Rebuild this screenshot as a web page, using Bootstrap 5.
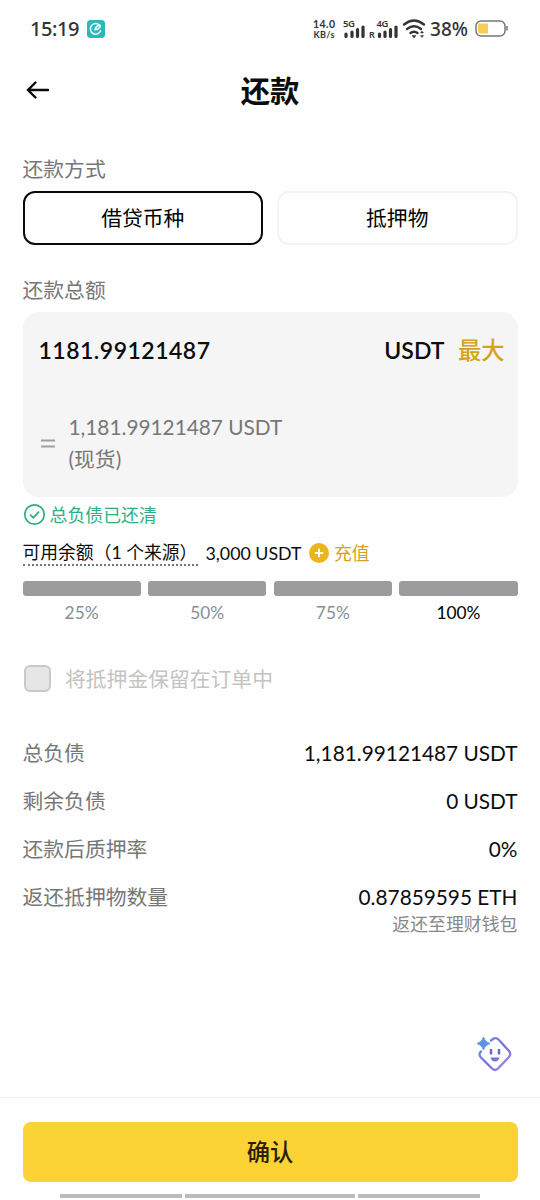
<!DOCTYPE html>
<html lang="zh-CN">
<head>
<meta charset="utf-8">
<meta name="viewport" content="width=device-width, initial-scale=1">
<title>还款</title>
<link rel="stylesheet" href="https://cdn.jsdelivr.net/npm/bootstrap@5.3.0/dist/css/bootstrap.min.css">
<style>
  body { font-family: Lato, "Noto Sans CJK SC", sans-serif; color: #0c0c0c; background: #fefefe; line-height: 1; font-size: 20.8px; }
  svg { display: block; flex: none; }
  .screen { height: 1200px; padding: 0 22.5px; overflow: hidden; }
  .status { height: 58px; margin: 0 -22.5px; padding: 0 32px 0 30px; font-family: "Noto Sans", sans-serif; color: #333; font-weight: 500; font-size: 20px; }
  .clock { letter-spacing: -.45px; }
  .status svg text { font-family: "Noto Sans", sans-serif; font-weight: 600; fill: #333; }
  .status svg .rate { font-family: Lato, sans-serif; font-weight: 700; }
  .topbar { height: 64px; }
  .topbar h1 { font-size: 29.3px; font-weight: 700; margin: 0; line-height: 1; padding-top: 2px; }
  .side { width: 28px; }
  .muted { color: #777; }
  .caption { height: 24px; padding-top: 1px; }
  .methods { gap: 14px; margin-top: 10px; }
  .method { height: 54px; border: 2px solid #f3f3f3; border-radius: 12px; background: transparent; font-weight: 400; font-size: 20.8px; line-height: 1; padding: 2px 0 0; color: #000; }
  .method.active { border-color: #0a0a0a; }
  .amount { height: 185px; border-radius: 16px; background: #f5f5f5; padding: 0 13px 0 16px; margin-top: 10px; }
  .amount-top { height: 77px; font-size: 23px; font-weight: 600; }
  .gold { color: #d5a31b; }
  .max { font-size: 23.3px; font-weight: 500; margin-left: 13.5px; padding-top: 1px; }
  .big { letter-spacing: .5px; }
  .equiv { line-height: 32.5px; padding-top: 21.5px; }
  .ok { height: 36px; font-size: 17.9px; color: #2fae86; }
  .ok span { padding-top: 2px; }
  .balance { height: 40px; font-size: 17.8px; }
  .balance > span { padding-top: 2px; }
  .dotted { border-bottom: 2px dotted #777; height: 26px; width: 175px; white-space: nowrap; }
  .steps { gap: 7.5px; padding-top: 7.5px; }
  .step { flex: 1 1 0; }
  .seg { height: 15px; border-radius: 3px; background: #9c9c9c; }
  .pct { height: 33px; font-size: 17.3px; color: #888f96; padding-top: 2px; }
  .box { width: 27px; height: 27px; border: 2px solid #c9c9c9; border-radius: 6px; background: #e6e6e6; }
  .faded { color: #c3c3c3; }
  .line { height: 47.7px; }
  .note { font-size: 17.9px; color: #888; }
  .footer-area { margin: 0 -22.5px; padding: 24px 22.5px 0; border-top: 1px solid #ededed; height: 103px; }
  .confirm { height: 60px; border-radius: 8px; background: #fbd334; border: 0; font-size: 23.3px; font-weight: 500; color: #2a1e05; line-height: 1; padding-top: 3px; }
  .handle { height: 4px; background: #bcbcbc; }
</style>
</head>
<body>
<main class="screen d-flex flex-column">
  <div class="status d-flex align-items-center">
    <span class="clock">15:19</span>
    <svg style="margin-left:8px" width="18" height="18" viewBox="0 0 18 18"><rect width="18" height="18" rx="3.5" fill="#2bb8bd"/><path d="M13.600 10.800A5.300 5.300 0 1 1 11.500 4.400M8 9.600C10 9.800 13.600 7.800 13.300 5.500 12.300 4.600 8.600 6 8 9.600" fill="none" stroke="#e6ffff" stroke-width="1.600" stroke-linecap="round"/></svg>
    <svg class="ms-auto" width="196" height="30" viewBox="312 14 196 30">
      <text class="rate" x="313" y="27.500" font-size="10.500" textLength="22">14.0</text>
      <text class="rate" x="313.500" y="38" font-size="9" textLength="21">KB/s</text>
      <text x="343" y="27" font-size="9.500" textLength="12">5G</text>
      <path d="M346 34v2.500M352 32v4.500M357.500 29.500v7M363 27v9.500" stroke="#333" stroke-width="3.200" stroke-linecap="round"/>
      <text x="369" y="38" font-size="9">R</text>
      <text x="376.500" y="27" font-size="9.500" textLength="12">4G</text>
      <path d="M379.500 34v2.500M385 32v4.500M390.500 29.500v7M396 27v9.500" stroke="#333" stroke-width="3.200" stroke-linecap="round"/>
      <path d="M404 24.500Q414 16.500 424 24.500M407 29q7-5.500 14 0M410.500 33q3.500-2.500 7 0" fill="none" stroke="#333" stroke-width="2.400" stroke-linecap="round"/>
      <path d="M412 35.500h4l-2 2.500zM420.500 33l1.500-2 1.500 2zM420.500 35.500l1.500 2 1.500-2z" fill="#333" stroke="#333" stroke-width=".5"/>
      <text x="430" y="35.500" style="font-weight:500" font-size="19.500" textLength="38" lengthAdjust="spacingAndGlyphs">38%</text>
      <rect x="476" y="21" width="29" height="15" rx="5" fill="#fff" stroke="#777" stroke-width="1.500"/>
      <path d="M480 23.500h8v10h-8q-2 0-2-2v-6q0-2 2-2" fill="#f6cc58"/><path d="M507 26v4.500" stroke="#777" stroke-width="1.500"/>
    </svg>
  </div>
  <header class="topbar d-flex align-items-center justify-content-between">
    <svg class="side" width="28" height="24" viewBox="0 0 28 24"><path d="M25 12H5M12.500 4.500L5 12l7.500 7.500" fill="none" stroke="#0a0a0a" stroke-width="2.400" stroke-linecap="round"/></svg>
    <h1>还款</h1><span class="side"></span>
  </header>

  <div class="caption muted d-flex align-items-center" style="margin-top:34.500px">还款方式</div>
  <div class="methods d-flex">
    <button class="method active flex-fill w-50">借贷币种</button>
    <button class="method flex-fill w-50">抵押物</button>
  </div>
  <div class="caption muted d-flex align-items-center" style="margin-top:33.500px">还款总额</div>
  <section class="amount">
    <div class="amount-top d-flex align-items-center">
      <span class="big">1181.99121487</span><span class="ms-auto">USDT</span><span class="gold max">最大</span>
    </div>
    <div class="equiv d-flex align-items-center muted">
      <svg width="30" height="14" viewBox="0 0 30 14"><path d="M2 4.500h14M2 10.500h14" stroke="#a0a0a0" stroke-width="2"/></svg>
      <div><div>1,181.99121487 USDT</div><div>(现货)</div></div>
    </div>
  </section>
  <div class="ok d-flex align-items-center">
    <svg width="27" height="24" viewBox="0 0 27 24"><circle cx="11.500" cy="11.500" r="9.700" fill="none" stroke="#2fae86" stroke-width="1.700"/><path d="M7 11.500l3.300 3.200 5.700-6" fill="none" stroke="#2fae86" stroke-width="1.700"/></svg>
    <span>总负债已还清</span>
  </div>
  <div class="balance d-flex align-items-center">
    <span class="dotted d-flex align-items-center">可用余额（1 个来源）</span>
    <span class="ms-2">3,000 USDT</span>
    <svg style="margin-left:7px" width="20" height="20" viewBox="0 0 20 20"><circle cx="10" cy="10" r="10" fill="#ecb51d"/><path d="M10 5.800v8.400M5.800 10h8.400" stroke="#fff" stroke-width="2"/></svg>
    <span class="gold" style="margin-left:5.500px">充值</span>
  </div>
  <div class="steps d-flex text-center">
    <div class="step"><div class="seg"></div><div class="pct d-flex align-items-center justify-content-center">25%</div></div>
    <div class="step"><div class="seg"></div><div class="pct d-flex align-items-center justify-content-center">50%</div></div>
    <div class="step"><div class="seg"></div><div class="pct d-flex align-items-center justify-content-center">75%</div></div>
    <div class="step"><div class="seg"></div><div class="pct d-flex align-items-center justify-content-center text-black">100%</div></div>
  </div>
  <div class="d-flex align-items-center faded" style="margin-top:36px;padding-left:1.500px">
    <span class="box"></span><span style="margin-left:14px;padding-top:3px">将抵押金保留在订单中</span>
  </div>
  <section style="margin-top:38.500px">
    <div class="line d-flex align-items-center justify-content-between"><span class="muted">总负债</span><span>1,181.99121487 USDT</span></div>
    <div class="line d-flex align-items-center justify-content-between"><span class="muted">剩余负债</span><span>0 USDT</span></div>
    <div class="line d-flex align-items-center justify-content-between"><span class="muted">还款后质押率</span><span>0%</span></div>
    <div class="line d-flex align-items-center justify-content-between"><span class="muted">返还抵押物数量</span><span>0.87859595 ETH</span></div>
    <div class="note text-end" style="margin-top:-4.500px">返还至理财钱包</div>
  </section>
  <div class="mt-auto d-flex justify-content-end" style="padding:0 5px 23px">
    <svg width="38" height="38" viewBox="0 0 38 38">
      <defs><linearGradient id="helper" x1="0" y1="0" x2="1" y2="1"><stop stop-color="#5b96e8"/><stop offset=".55" stop-color="#7d6fd6"/><stop offset="1" stop-color="#a58be8"/></linearGradient></defs>
      <path d="M16 4.500l2-1.500q3-2 5.500.5L34 15q2.500 3 0 6L23 32.500q-3 3-6 0L6 21.500Q3 18 6 15.500" fill="none" stroke="url(#helper)" stroke-width="2.300" stroke-linecap="round"/>
      <path d="M8.500 1q1.300 5 6.500 6.500-5.200 1.500-6.500 6.500-1.300-5-6.500-6.500 5.200-1.500 6.500-6.500" fill="#5c93e4" stroke="#5c93e4" stroke-width=".8" stroke-linejoin="round"/>
      <path d="M16 14v3.500M24 14v3.500" stroke="#7169d2" stroke-width="2.600" stroke-linecap="round"/><path d="M15.500 21.500h9q-1 4-4.500 4t-4.500-4" fill="#7972d5"/>
    </svg>
  </div>
  <footer class="footer-area">
    <button class="confirm w-100 d-flex align-items-center justify-content-center">确认</button>
    <div class="d-flex" style="gap:3px;margin:12px 37.500px 0"><span class="handle" style="width:122px"></span><span class="handle" style="width:170px"></span><span class="handle" style="width:122px"></span></div>
  </footer>
</main>
<script src="https://cdn.jsdelivr.net/npm/bootstrap@5.3.0/dist/js/bootstrap.bundle.min.js"></script>
</body>
</html>
